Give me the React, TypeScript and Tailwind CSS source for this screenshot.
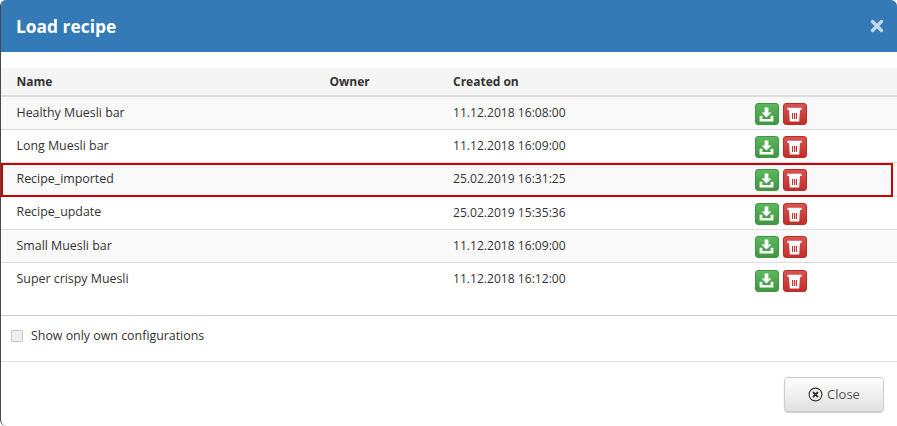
import React from "react";

const rows = [
  ["Healthy Muesli bar", "11.12.2018 16:08:00"],
  ["Long Muesli bar", "11.12.2018 16:09:00"],
  ["Recipe_imported", "25.02.2019 16:31:25"],
  ["Recipe_update", "25.02.2019 15:35:36"],
  ["Small Muesli bar", "11.12.2018 16:09:00"],
  ["Super crispy Muesli", "11.12.2018 16:12:00"],
];

function DownloadIcon() {
  return (
    <svg width="15" height="15" viewBox="0 0 15 15" fill="#fff" aria-hidden="true">
      <path d="M5.6 0.5h3.8v5h3L7.5 10.4 2.6 5.5h3z" />
      <path d="M0.6 8.8h2.8v3.2h8.2V8.8h2.8v5.6H0.6z" />
    </svg>
  );
}

function TrashIcon() {
  return (
    <svg width="15" height="16" viewBox="0 0 15 16" aria-hidden="true">
      <path fill="#fff" d="M0.4 1.8h14.2v2.2H0.4z" />
      <path fill="#fff" d="M2 4h11l-0.8 11.4H2.8z" />
      <path fill="#c9302c" d="M5 7h1.1v6H5zM7 7h1.1v6H7zM8.9 7H10v6H8.9z" />
    </svg>
  );
}

export default function App() {
  return (
    <div className="relative h-[426px] w-[897px] overflow-hidden rounded-[6px] border-l border-l-[#4a4a4a] bg-white font-['Open_Sans',sans-serif] text-[12.4px] text-[#333]">
      <div className="flex h-[52px] items-center justify-between bg-[#337ab7] pl-[15px] pr-[13px]">
        <h1 className="text-[17.4px] font-bold text-white">Load recipe</h1>
        <svg width="14" height="14" viewBox="0 0 14 14" aria-hidden="true" className="opacity-70">
          <path d="M2.5 2.5l9 9M11.5 2.5l-9 9" stroke="#fff" strokeWidth="3.4" strokeLinecap="round" />
        </svg>
      </div>

      <div className="mt-[16px] flex h-[29px] items-center border-b-2 border-b-[#ddd] bg-[#f5f5f5] text-[12px] font-bold">
        <div className="w-[328.5px] pl-[15.5px]">Name</div>
        <div className="w-[123.5px]">Owner</div>
        <div>Created on</div>
      </div>

      {rows.map(([name, date], i) => (
        <div
          key={name}
          className={`flex h-[33.2px] items-center ${i < 5 ? "border-b border-b-[#ddd]" : ""} ${i % 2 === 0 ? "bg-[#f9f9f9]" : "bg-white"}`}
        >
          <div className="w-[328.5px] pl-[15.5px]">{name}</div>
          <div className="w-[123.5px]" />
          <div className="w-[301.5px] text-[12.1px]">{date}</div>
          <div className="mt-[2px] flex gap-[4px]">
            <button className="flex h-[22px] w-[24px] items-center justify-center rounded-[3px] border border-[#419641] bg-gradient-to-b from-[#5cb85c] to-[#419641]">
              <DownloadIcon />
            </button>
            <button className="flex h-[22px] w-[24px] items-center justify-center rounded-[3px] border border-[#b92c28] bg-gradient-to-b from-[#d9534f] to-[#c12e2a]">
              <TrashIcon />
            </button>
          </div>
        </div>
      ))}

      <div className="mt-[19px] flex h-[46px] items-center gap-[8px] border-t border-t-[#ccc] pb-[5px] pl-[10px]">
        <span className="h-[12px] w-[12px] rounded-[2px] border border-[#c8c8c8] bg-[#eee]" />
        <span>Show only own configurations</span>
      </div>

      <div className="flex justify-end border-t border-t-[#e5e5e5] pr-[13px] pt-[15px]">
        <button className="flex h-[35px] w-[100px] items-center justify-center gap-[4px] rounded-[4px] border border-[#ccc] bg-gradient-to-b from-white to-[#e0e0e0] text-[13px] text-[#555] shadow-[0_1px_1px_rgba(0,0,0,0.2)]">
          <svg width="15" height="15" viewBox="0 0 15 15" fill="none" aria-hidden="true">
            <circle cx="7.5" cy="7.5" r="6.4" stroke="#333" strokeWidth="1.1" />
            <path d="M5 5l5 5M10 5l-5 5" stroke="#333" strokeWidth="1.8" />
          </svg>
          Close
        </button>
      </div>

      <div className="absolute left-0 top-[163px] h-[34px] w-[892px] border-2 border-[#c00]" />
    </div>
  );
}
